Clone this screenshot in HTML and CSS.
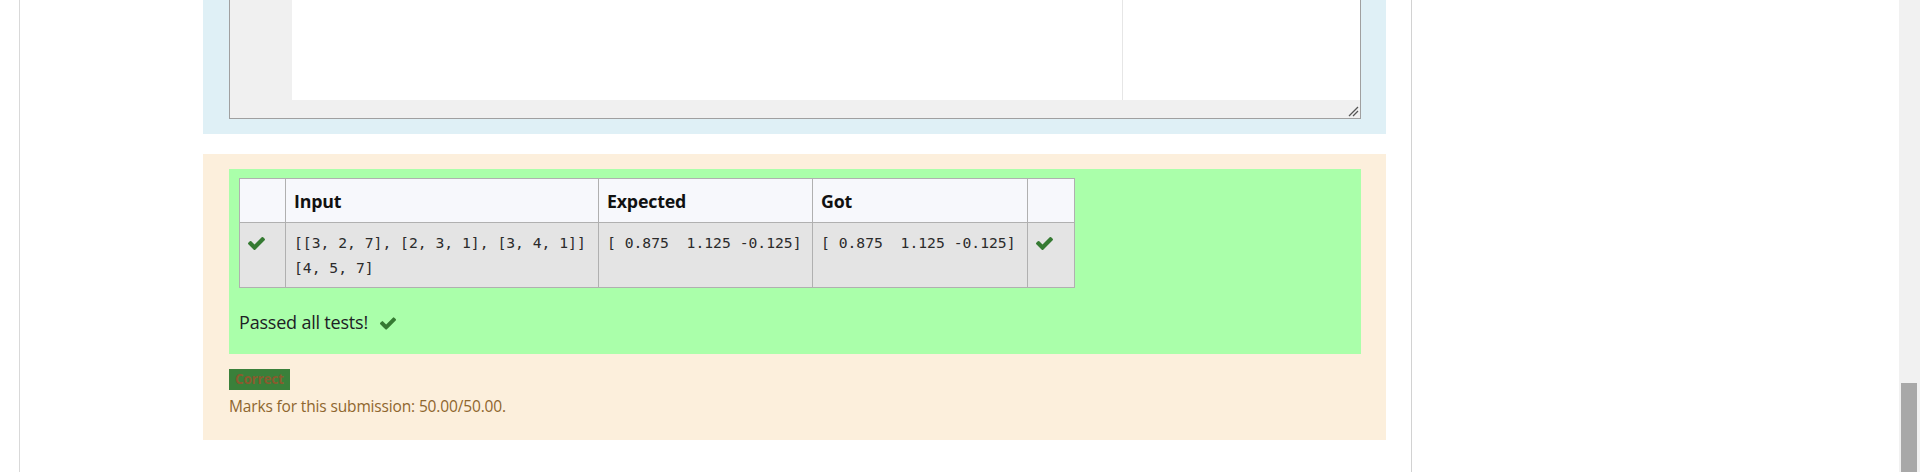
FILE: index.html
```html
<!DOCTYPE html>
<html lang="en">
<head>
<meta charset="utf-8">
<title>Question result</title>
<link rel="stylesheet" href="styles.css">
</head>
<body>
<div class="viewport">
  <div class="column">
    <div class="content">
      <div class="formulation">
        <div class="editor">
          <div class="ace">
            <div class="gutter"></div>
            <div class="code"><div class="code-area"></div></div>
          </div>
          <div class="editor-foot"></div>
          <svg class="grip" width="11" height="11" viewBox="0 0 11 11"><path d="M10 1 L1 10 M10 5 L5 10" stroke="#555" stroke-width="1.3" fill="none"/></svg>
        </div>
      </div>
      <div class="outcome">
        <div class="results">
          <table class="tests">
            <colgroup><col class="c1"><col class="c2"><col class="c3"><col class="c4"><col class="c5"></colgroup>
            <thead>
              <tr><th></th><th>Input</th><th>Expected</th><th>Got</th><th></th></tr>
            </thead>
            <tbody>
              <tr>
                <td class="ok"><svg class="tick" viewBox="121 334 1550 1188"><path d="M1671 566q0 40-28 68l-724 724-136 136q-28 28-68 28t-68-28l-136-136-362-362q-28-28-28-68t28-68l136-136q28-28 68-28t68 28l294 295 656-657q28-28 68-28t68 28l136 136q28 28 28 68z"/></svg></td>
                <td><pre>[[3, 2, 7], [2, 3, 1], [3, 4, 1]]
[4, 5, 7]</pre></td>
                <td><pre>[ 0.875  1.125 -0.125]</pre></td>
                <td><pre>[ 0.875  1.125 -0.125]</pre></td>
                <td class="ok"><svg class="tick" viewBox="121 334 1550 1188"><path d="M1671 566q0 40-28 68l-724 724-136 136q-28 28-68 28t-68-28l-136-136-362-362q-28-28-28-68t28-68l136-136q28-28 68-28t68 28l294 295 656-657q28-28 68-28t68 28l136 136q28 28 28 68z"/></svg></td>
              </tr>
            </tbody>
          </table>
          <p class="passed">Passed all tests! <svg class="tick big" viewBox="121 334 1550 1188"><path d="M1671 566q0 40-28 68l-724 724-136 136q-28 28-68 28t-68-28l-136-136-362-362q-28-28-28-68t28-68l136-136q28-28 68-28t68 28l294 295 656-657q28-28 68-28t68 28l136 136q28 28 28 68z"/></svg></p>
        </div>
        <div class="grade"><span class="badge">Correct</span></div>
        <div class="marks">Marks for this submission: 50.00/50.00.</div>
      </div>
    </div>
  </div>
  <div class="scrollbar"><div class="thumb"></div></div>
</div>
</body>
</html>
```
FILE: styles.css
```css
html, body {
  margin: 0;
  padding: 0;
  background: #fff;
}
body {
  font-family: "Open Sans", "Noto Sans", sans-serif;
  color: #1d2125;
}
.viewport {
  display: flex;
  height: 472px;
  overflow: hidden;
}
.column {
  flex: none;
  margin-left: 19px;
  border-left: 1px solid #d9d9d9;
  border-right: 1px solid #d2d2d2;
  padding-left: 183px;
  padding-right: 25px;
  box-sizing: border-box;
  width: 1393px;
}
.content {
  margin-top: -60px;
}
.formulation {
  background: #dff0f6;
  padding: 15px 25px 15px 26px;
}
.editor {
  position: relative;
  border: 1px solid #a0a0a0;
  background: #f0f0f0;
}
.ace {
  display: flex;
  height: 144px;
}
.gutter {
  width: 62px;
  background: #f0f0f0;
}
.code {
  flex: 1;
  background: #fff;
  display: flex;
}
.code-area {
  width: 830px;
  border-right: 1px solid #e6e6e6;
}
.editor-foot {
  height: 18px;
}
.grip {
  position: absolute;
  right: 1px;
  bottom: 1px;
}
.outcome {
  margin-top: 20px;
  background: #fcefdc;
  padding: 15px 25px 22px 26px;
  color: #8e662e;
}
.results {
  background: #aaffaa;
  padding: 9px 10px 1px;
  color: #1d2125;
}
.tests {
  border-collapse: collapse;
  table-layout: fixed;
  width: 835px;
}
.c1 { width: 46px; }
.c2 { width: 313px; }
.c3 { width: 214px; }
.c4 { width: 215px; }
.c5 { width: 47px; }
.tests th, .tests td {
  border: 1px solid #b0b0b0;
  text-align: left;
  vertical-align: top;
}
.tests th {
  background: #f7f8fc;
  font-weight: 700;
  font-size: 17.8px;
  line-height: 28px;
  padding: 7.5px 8px;
  letter-spacing: -0.2px;
  color: #111;
}
.tests td {
  background: #e4e4e4;
  padding: 7px 8px;
  line-height: 25px;
}
.tests pre {
  margin: 0;
  font-family: "DejaVu Sans Mono", "Liberation Mono", monospace;
  font-size: 14.7px;
  line-height: 25px;
  color: #2b2b2b;
}
.tick {
  fill: #357a32;
  width: 17px;
  height: 13px;
  vertical-align: middle;
}
.ok {
  line-height: 25px;
}
.passed {
  margin: 20px 0 17px;
  font-size: 18px;
  letter-spacing: -0.2px;
  line-height: 28px;
}
.tick.big {
  width: 16px;
  height: 13px;
  margin-left: 8px;
  vertical-align: -1px;
}
.grade {
  margin-top: 14px;
  line-height: 21px;
  height: 21px;
}
.badge {
  display: inline-block;
  background: #3a803a;
  color: #8a5a2e;
  font-weight: 700;
  font-size: 13.5px;
  padding: 0 6px;
  line-height: 21px;
  letter-spacing: -0.2px;
}
.marks {
  margin-top: 5px;
  font-size: 15.5px;
  line-height: 24px;
  letter-spacing: -0.15px;
}
.scrollbar {
  flex: none;
  margin-left: auto;
  width: 21px;
  background: #f1f1f1;
}
.thumb {
  margin-top: 383px;
  margin-left: 2px;
  width: 16px;
  height: 89px;
  background: #a8a8a8;
}
```
